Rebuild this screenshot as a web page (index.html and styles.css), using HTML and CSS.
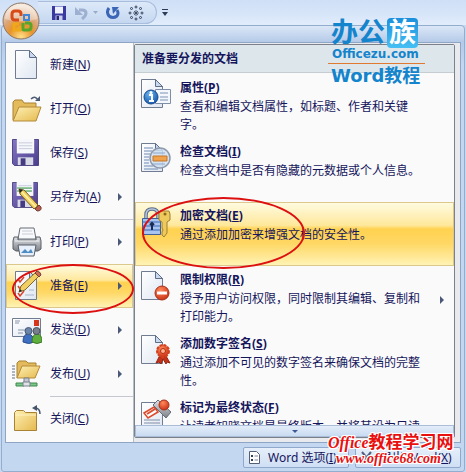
FILE: index.html
```html
<!DOCTYPE html>
<html lang="zh-CN">
<head>
    <meta charset="UTF-8">
    <meta name="viewport" content="width=device-width, initial-scale=1.0">
    <title>Word 教程 - 准备</title>
    <link rel="stylesheet" href="styles.css">
</head>
<body>
    <!-- shared gradients and shapes -->
    <svg class="defs" width="0" height="0" aria-hidden="true">
        <defs>
            <linearGradient id="paper" x1="0" y1="0" x2="1" y2="1">
                <stop offset="0" stop-color="#fff"/>
                <stop offset="1" stop-color="#dfe7f2"/>
            </linearGradient>
            <linearGradient id="gold" x1="0" y1="0" x2="1" y2="1">
                <stop offset="0" stop-color="#fdf0b4"/>
                <stop offset="1" stop-color="#e6b94e"/>
            </linearGradient>
            <linearGradient id="purple" x1="0" y1="0" x2="1" y2="1">
                <stop offset="0" stop-color="#8577c4"/>
                <stop offset="1" stop-color="#4b3d8c"/>
            </linearGradient>
            <linearGradient id="steel" x1="0" y1="0" x2="0" y2="1">
                <stop offset="0" stop-color="#dfe1e4"/>
                <stop offset="1" stop-color="#7d8189"/>
            </linearGradient>
            <radialGradient id="orb" cx=".5" cy=".95" r=".95">
                <stop offset="0" stop-color="#ffe08a"/>
                <stop offset=".35" stop-color="#e8932a"/>
                <stop offset=".6" stop-color="#dba67a"/>
                <stop offset="1" stop-color="#fbf3ea"/>
            </radialGradient>
            <radialGradient id="blueball" cx=".4" cy=".3" r=".8">
                <stop offset="0" stop-color="#6cb4f0"/>
                <stop offset="1" stop-color="#0b4fa8"/>
            </radialGradient>
            <radialGradient id="redball" cx=".4" cy=".3" r=".8">
                <stop offset="0" stop-color="#ff8a5c"/>
                <stop offset="1" stop-color="#c5280c"/>
            </radialGradient>
            <symbol id="page" viewBox="0 0 22 30">
                <path d="M.5.5h14l7 7v21H.5z" fill="url(#paper)" stroke="#6f7c92"/>
                <path d="M14.500.5v7h7z" fill="#c9d8ec" stroke="#5d6e8a"/>
            </symbol>
            <symbol id="floppy" viewBox="0 0 28 28">
                <path d="M.5.5h27v27h-25l-2-2z" fill="url(#purple)" stroke="#4a4080"/>
                <path d="M5 0h18v15H5z" fill="#f6f7fb"/>
                <path d="M7 4h14M7 7h14M7 10h14" stroke="#c6cbd8"/>
                <path d="M6 19h16v8H6z" fill="#d8dbe6"/>
                <path d="M9 20h5v7H9z" fill="#463a82"/>
            </symbol>
            <symbol id="pencil" viewBox="0 0 24 24">
                <path d="M1 1l5 1 14 15-4 4L2 6z" fill="#f2d05a" stroke="#76602c"/>
                <path d="M4 4l14 15" stroke="#fff3ae" stroke-width="1.500"/>
                <path d="M1 1l4 1-3 3z" fill="#222"/>
                <path d="M17 21l4-4 2 2q1 4-4 4z" fill="#bd5a4c" stroke="#70443c"/>
            </symbol>
        </defs>
    </svg>

    <header class="titlebar">
        <div class="quick-access">
            <button class="tool" aria-label="保存">
                <svg width="14" height="14" viewBox="0 0 28 28"><path d="M0 0h28v28H0z" fill="#3939a0"/><path d="M6 1h16v14H6z" fill="#eef2ff"/><path d="M7 19h14v9H7z" fill="#c9cee8"/><path d="M9 20h5v8H9z" fill="#26267a"/></svg>
            </button>
            <button class="tool undo" aria-label="撤消">
                <svg width="14" height="14" viewBox="0 0 14 14"><path d="M5 4h3q4 0 4 3 0 3-4 6" fill="none" stroke="#9db0d2" stroke-width="3"/><path d="M1 1v8h8z" fill="#9db0d2"/></svg>
                <svg width="5" height="3" viewBox="0 0 5 3"><path d="M0 0h5L2.500 3z" fill="#9aabc8"/></svg>
            </button>
            <button class="tool" aria-label="重复">
                <svg width="14" height="14" viewBox="0 0 14 14"><path d="M3 2Q0 6 3 10q4 3 8 0 2-3 0-6" fill="none" stroke="#3b66b8" stroke-width="3"/><path d="M6 1h7l-6 7z" fill="#3b66b8"/></svg>
            </button>
            <button class="tool" aria-label="符号">
                <svg width="16" height="16" viewBox="0 0 16 16" fill="none" stroke="#35425c"><path d="M8 5v6M5 8h6M6 6l4 4M10 6l-4 4" stroke-width=".8"/><g stroke-width="1"><circle cx="8" cy="2" r="1"/><circle cx="8" cy="14" r="1"/><circle cx="2" cy="8" r="1"/><circle cx="14" cy="8" r="1"/><circle cx="3.500" cy="3.500" r="1"/><circle cx="12.500" cy="3.500" r="1"/><circle cx="3.500" cy="12.500" r="1"/><circle cx="12.500" cy="12.500" r="1"/></g></svg>
            </button>
        </div>
        <button class="tool customize" aria-label="自定义快速访问工具栏">
            <svg width="6" height="7" viewBox="0 0 6 7"><path d="M0 .5h6" stroke="#2c3a58"/><path d="M0 3h6L3 7z" fill="#2c3a58"/></svg>
        </button>
        <button class="office-button" aria-label="Office 按钮">
            <svg width="38" height="38" viewBox="0 0 38 38">
                <circle cx="19" cy="19" r="18" fill="url(#orb)" stroke="#8a7768"/>
                <path d="M3 17a16 14 0 0 1 32 0q-16 5-32 0z" fill="#fff" opacity=".35"/>
                <g fill="none" stroke-width="3">
                    <path d="M17 18h-4q-3 0-3-3v-3q0-3 3-3h3q3 0 3 3v2" stroke="#d84a16"/>
                    <path d="M22 13h5v5h-5z" stroke="#3f86d8" stroke-width="2"/>
                    <path d="M17 22h-5v6h6v-4" stroke="#f0a818"/>
                    <path d="M21 21v6q0 1 1 1h4q3 0 3-3v-2q0-2-3-2h-3" stroke="#57a52c"/>
                </g>
            </svg>
        </button>
    </header>

    <main class="menu">
        <div class="menu-body">
            <nav class="commands">
                <button class="command">
                    <svg class="icon" viewBox="0 0 30 30"><use href="#page" x="3" width="22" height="30"/></svg>
                    <span>新建(<u>N</u>)</span>
                </button>
                <button class="command">
                    <svg class="icon" viewBox="0 0 30 30"><path d="M1 26V8l2-2h7l2 3h12v4" fill="#e3bb5c" stroke="#a98234"/><path d="M1 27l6-14h22l-5 14z" fill="url(#gold)" stroke="#b48a38"/><path d="M19 5q4-4 7 1" fill="none" stroke="#4e5d74" stroke-width="1.500"/><path d="M23 7h5V2z" fill="#4e5d74"/></svg>
                    <span>打开(<u>O</u>)</span>
                </button>
                <button class="command">
                    <svg class="icon" viewBox="0 0 30 30"><use href="#floppy" y="1" width="27" height="27"/></svg>
                    <span>保存(<u>S</u>)</span>
                </button>
                <button class="command">
                    <svg class="icon" viewBox="0 0 30 30"><use href="#floppy" width="26" height="26"/><path d="M5 6h15M5 9h15" stroke="#39a045"/><use href="#pencil" x="6" y="6" width="24" height="24"/></svg>
                    <span>另存为(<u>A</u>)</span>
                    <i class="arrow"></i>
                </button>
                <hr>
                <button class="command">
                    <svg class="icon" viewBox="0 0 30 30"><path d="M8 1h14l2 11H6z" fill="#f8f9fb" stroke="#676d78"/><path d="M10 4h10M10 7h11" stroke="#c8ccd4"/><path d="M2 10h4v3h18v-3h4l1 4v8l-3 2H4l-3-2v-8z" fill="url(#steel)" stroke="#5a5e66"/><path d="M3 14h24" stroke="#f4f5f7"/><path d="M6 18h18l-2 11H8z" fill="#e7f0fa" stroke="#5a5e66"/><path d="M9 26l4-4 3 3 3-3 2 4z" fill="#4f8cc4"/></svg>
                    <span>打印(<u>P</u>)</span>
                    <i class="arrow"></i>
                </button>
                <button class="command active">
                    <svg class="icon" viewBox="0 0 30 30"><use href="#page" x="3" width="22" height="30"/><path d="M6 8l2 3 4-5M6 15l2 3 4-5M6 22l2 3 4-5" fill="none" stroke="#d8452c" stroke-width="1.500"/><path d="M13 24h9M17 19h5" stroke="#a9b6ca"/><path d="M7 21l2-6L24 1l4 3-15 15z" fill="#f2cf62" stroke="#80652c"/><path d="M23 2l2-2q4 1 4 4l-2 2z" fill="#cf6a52" stroke="#70443c"/><path d="M7 21l1-3 2 2z" fill="#222"/></svg>
                    <span>准备(<u>E</u>)</span>
                    <i class="arrow"></i>
                </button>
                <button class="command">
                    <svg class="icon" viewBox="0 0 30 30"><path d="M.5 3.500h28v18H.5z" fill="url(#paper)" stroke="#6f7c92"/><path d="M3 6h5M3 8h4M6 15h8M6 18h5" stroke="#8995aa"/><path d="M22 5h5v6h-5z" fill="#d8341c"/><path d="M11 27q0-8 5-8t6 8q-5 3-11 0z" fill="#3f6fc0" stroke="#2a4d8c"/><circle cx="16.500" cy="16" r="3.500" fill="#6b86a8" stroke="#44597a"/><path d="M20 27q0-8 5-8t5 8q-5 3-10 0z" fill="#5fae3e" stroke="#3c7a26"/><circle cx="24.500" cy="16" r="3.500" fill="#777f8c" stroke="#4a505c"/></svg>
                    <span>发送(<u>D</u>)</span>
                    <i class="arrow"></i>
                </button>
                <button class="command">
                    <svg class="icon" viewBox="0 0 30 30"><path d="M0 7h3M0 10h3M0 13h3M0 16h3M0 19h3" stroke="#62708a"/><path d="M5 19V4l2-2h7l2 2h8v4" fill="#e3bb5c" stroke="#a98234"/><path d="M5 19L10 7h18l-5 12z" fill="url(#gold)" stroke="#b48a38"/><path d="M12 19h5v7h-5z" fill="#c3c8d0" stroke="#7a828e"/><path d="M4 24h8v3H4zM17 24h8v3h-8z" fill="#7cc68a" stroke="#3a8a4c"/><path d="M11 23h7v4h-7z" fill="#dfe3e8" stroke="#7a828e"/></svg>
                    <span>发布(<u>U</u>)</span>
                    <i class="arrow"></i>
                </button>
                <hr>
                <button class="command">
                    <svg class="icon" viewBox="0 0 30 30"><path d="M2.500 26.500V8.500l2-2h7l2 2h11v18z" fill="url(#gold)" stroke="#a98234"/><path d="M3 11h21" stroke="#fff3c0"/><path d="M28 10q0-6-5-6" fill="none" stroke="#44546c" stroke-width="1.500"/><path d="M20 4l5-3v6z" fill="#44546c"/></svg>
                    <span>关闭(<u>C</u>)</span>
                </button>
            </nav>

            <section class="submenu">
                <h2>准备要分发的文档</h2>
                <div class="entries">
                    <button class="entry">
                        <svg class="icon" viewBox="0 0 30 30"><use href="#page" width="22" height="30"/><path d="M14.500 10.500h15v14h-15z" fill="#f4f8fd" stroke="#7f8ea8"/><path d="M19 14h8M19 18h8M19 21h8" stroke="#7c90b4"/><circle cx="10" cy="18" r="7" fill="url(#blueball)" stroke="#1a4a8c"/><path d="M8 16h3v6M8 22h5" fill="none" stroke="#fff" stroke-width="2"/><circle cx="10" cy="13.500" r="1.500" fill="#fff"/></svg>
                        <span class="entry-text"><b>属性(<u>P</u>)</b><span>查看和编辑文档属性，如标题、作者和关键字。</span></span>
                    </button>
                    <button class="entry">
                        <svg class="icon" viewBox="0 0 30 30"><use href="#page" width="22" height="30"/><path d="M3 5h9M3 8h8M3 11h6M3 14h5M3 17h5M3 20h5M3 23h9M3 26h14" stroke="#6f89b4"/><circle cx="19" cy="15" r="10" fill="#cfe0f2" fill-opacity=".85" stroke="#8e9aac" stroke-width="1.500"/><path d="M12 13h14v5H12z" fill="#f0a24c" stroke="#c5762a"/><path d="M12 10h12M12 21h12" stroke="#8fa6c8"/></svg>
                        <span class="entry-text"><b>检查文档(<u>I</u>)</b><span>检查文档中是否有隐藏的元数据或个人信息。</span></span>
                    </button>
                    <button class="entry active">
                        <svg class="icon" viewBox="0 0 30 30"><path d="M5 13V8q0-6 6-6t6 6v5" fill="none" stroke="#5c6c88" stroke-width="3.500"/><path d="M5 13V8q0-6 6-6t6 6v5" fill="none" stroke="#b8c8e0" stroke-width="1.500"/><path d="M1.500 11.500h18v16h-18z" fill="#a9c4ee" stroke="#40609c"/><path d="M2 15h17M2 19h17M2 23h17" stroke="#5e86cc" stroke-width="1.500"/><path d="M11 23v-6M9 18l2-2 2 2" stroke="#1c2c50" stroke-width="2" fill="none"/><path d="M19 4h9l1 3v6l-3 2v11l-3 4-2-2v-3l1-2-1-2v-6l-3-2V6z" fill="#eec95c" stroke="#a08030"/><circle cx="24" cy="7" r="1.500" fill="#8a6a20"/></svg>
                        <span class="entry-text"><b>加密文档(<u>E</u>)</b><span>通过添加加密来增强文档的安全性。</span></span>
                    </button>
                    <button class="entry">
                        <svg class="icon" viewBox="0 0 30 30"><use href="#page" width="22" height="30"/><circle cx="21" cy="22" r="7" fill="url(#redball)" stroke="#a83018"/><path d="M16 20.500h10v3H16z" fill="#fff"/></svg>
                        <span class="entry-text"><b>限制权限(<u>R</u>)</b><span>授予用户访问权限，同时限制其编辑、复制和打印能力。</span></span>
                        <i class="arrow"></i>
                    </button>
                    <button class="entry">
                        <svg class="icon" viewBox="0 0 30 30"><use href="#page" width="22" height="30"/><path d="M18 22l-3 6 3-1 2 2 2-5 3 5 1-2 3 1-4-7z" fill="#c2321a" stroke="#982410"/><circle cx="22" cy="16" r="6" fill="url(#redball)" stroke="#d4401c" stroke-width="2" stroke-dasharray="3 1"/><circle cx="22" cy="16" r="2.500" fill="#ffb08c" stroke="#b02c12"/></svg>
                        <span class="entry-text"><b>添加数字签名(<u>S</u>)</b><span>通过添加不可见的数字签名来确保文档的完整性。</span></span>
                    </button>
                    <button class="entry">
                        <svg class="icon" viewBox="0 0 30 30"><use href="#page" y="3" width="22" height="30"/><path d="M3 21h16M3 24h16M3 27h16" stroke="#7f8da8"/><path d="M3 14l10-6 4 5-10 6z" fill="#fff" stroke="#dc4a2c" stroke-width="1.500"/><path d="M6 15l8-5" stroke="#dc4a2c" stroke-width="2"/><path d="M12 6l5-5 13 12-5 6z" fill="url(#steel)" stroke="#666c78"/><circle cx="23" cy="6" r="5" fill="url(#redball)" stroke="#a83018"/></svg>
                        <span class="entry-text"><b>标记为最终状态(<u>F</u>)</b><span>让读者知晓文档是最终版本，并将其设为只读的。</span></span>
                    </button>
                </div>
                <button class="scroll-down" aria-label="向下滚动"><i></i></button>
            </section>
        </div>

        <footer class="menu-footer">
            <button class="option">
                <svg width="11" height="13" viewBox="0 0 11 13"><path d="M.5.5h7l3 3v9H.5z" fill="#fff" stroke="#54607a"/><path d="M2 4h2v2H2zM2 8h2v2H2z" fill="#33405c"/><path d="M5.500 5H9M5.500 9H9" stroke="#7a859c"/></svg>
                <span>Word 选项(<u>I</u>)</span>
            </button>
            <button class="option exit">
                <svg width="11" height="13" viewBox="0 0 11 13"><path d="M1 1l9 11M10 1L1 12" stroke="#54607a" stroke-width="2"/></svg>
                <span>退出 Word(<u>X</u>)</span>
            </button>
        </footer>

        <div class="ring ring-prepare"></div>
        <div class="ring ring-encrypt"></div>
        <div class="site-mark"><span><em>Office</em>教程学习网</span><em class="site-url">www.office68.com</em></div>
    </main>

    <aside class="logo">
        <div class="logo-name">办公<span>族</span></div>
        <div class="logo-site">Officezu.com</div>
        <div class="logo-topic">Word教程</div>
    </aside>
</body>
</html>
```

FILE: styles.css
```css
* {
    box-sizing: border-box;
}
body {
    position: relative;
    margin: 0;
    background: #c6d9f1;
    color: #15155c;
    font-family: "Noto Sans", "Noto Sans CJK SC", sans-serif;
    font-size: 12px;
}
button {
    margin: 0;
    padding: 0;
    border: 0;
    background: none;
    color: inherit;
    font: inherit;
    text-align: left;
}
svg {
    display: block;
    flex: none;
}
.defs {
    position: absolute;
}

/* title bar */
.titlebar {
    position: relative;
    z-index: 1;
    display: flex;
    align-items: center;
    height: 25px;
    padding-left: 38px;
    background: linear-gradient(#cfdff6, #d8e6f9 60%, #e2edfb);
}
.quick-access {
    display: flex;
    align-items: center;
    gap: 8px;
    height: 23px;
    padding: 0 12px 0 14px;
    border: 1px solid #a9bddc;
    border-left: 0;
    border-radius: 0 12px 12px 0;
    background: linear-gradient(#dde9f9, #c5d7f0);
}
.tool {
    display: flex;
    align-items: center;
    gap: 5px;
}
.customize {
    margin-left: 5px;
}
.office-button {
    position: absolute;
    top: 2px;
    left: 2px;
}

/* menu window */
.menu {
    position: relative;
    margin: 0 1px;
    padding: 16px 3px 0;
    border: 1px solid #93adcf;
    border-radius: 4px 4px 3px 3px;
    background: linear-gradient(#dbe7f7, #b5cae8 16px, #c4d7f0 40px, #c4d7f0);
}
.menu-body {
    display: flex;
    border: 1px solid #8fa5c6;
    background: #e9eaee;
}
.commands {
    flex: none;
    width: 128px;
    padding-bottom: 1px;
    background: #fafafa;
    border-right: 1px solid #b8bcc4;
}
.command {
    display: flex;
    align-items: center;
    gap: 8px;
    width: 100%;
    height: 44px;
    padding: 0 10px 0 5px;
    border: 1px solid transparent;
    line-height: 18px;
}
.icon {
    width: 30px;
    height: 30px;
}
.commands hr {
    height: 1px;
    margin: 0 0 0 44px;
    border: 0;
    background: #c5c8ce;
}
.arrow {
    flex: none;
    margin-left: auto;
    border: 4px solid transparent;
    border-right: 0;
    border-left-color: #4b5878;
}
.command.active,
.entry.active {
    border-color: #dcc88c;
    background: linear-gradient(#fffbe0, #ffe89c 36%, #ffd250 42%, #ffd764 65%, #fff3b4);
}

/* right panel */
.submenu {
    display: flex;
    flex: 1;
    flex-direction: column;
    min-width: 0;
    margin: 1px 5px 4px 0;
    border: 1px solid #7c8088;
    border-radius: 2px;
    background: #fafafa;
}
.submenu h2 {
    margin: 0 0 1px;
    padding: 5px 7px 4px;
    border-bottom: 1px solid #c5cdd2;
    background: #dde6eb;
    font-size: 12px;
    line-height: 18px;
}
.entries {
    flex: 1 1 auto;
    height: 0;
    overflow: hidden;
}
.entry {
    display: flex;
    align-items: flex-start;
    gap: 9px;
    width: 100%;
    height: 64px;
    padding: 4px 9px 0 5px;
    border: 1px solid transparent;
}
.entry .arrow {
    align-self: center;
}
.entry-text {
    width: 242px;
    line-height: 18px;
}
.entry-text b {
    display: block;
    margin-bottom: 1px;
}
.scroll-down {
    display: flex;
    align-items: center;
    justify-content: center;
    height: 12px;
    border: 1px solid #a9bcd8;
    background: linear-gradient(#e4edf9, #c9dbf2);
}
.scroll-down i {
    border: 3px solid transparent;
    border-top-color: #3c5890;
    border-bottom: 0;
}

/* bottom buttons */
.menu-footer {
    display: flex;
    justify-content: flex-end;
    gap: 6px;
    padding: 4px 0 3px;
}
.option {
    display: flex;
    align-items: center;
    gap: 8px;
    width: 106px;
    height: 21px;
    padding: 0 5px;
    border: 1px solid #8fa8cc;
    border-radius: 2px;
    background: linear-gradient(#e6effa, #cfdff4);
    line-height: 18px;
    white-space: nowrap;
}

/* marks drawn over the menu */
.ring {
    position: absolute;
    border: 2px solid #dc1010;
    border-radius: 50%;
}
.ring-prepare {
    top: 238px;
    left: 10px;
    width: 122px;
    height: 50px;
}
.ring-encrypt {
    top: 171px;
    left: 140px;
    width: 163px;
    height: 72px;
}
.site-mark {
    position: absolute;
    right: 10px;
    bottom: 4px;
    display: flex;
    flex-direction: column;
    width: 126px;
    color: #e81010;
    font: bold 17px/16px "Liberation Serif", "Noto Sans CJK SC", serif;
    text-shadow: 1px 0 #fff, -1px 0 #fff, 0 1px #fff, 0 -1px #fff, 1px 1px #fff, -1px -1px #fff, 1px -1px #fff, -1px 1px #fff;
    white-space: nowrap;
}
.site-mark em {
    font-size: 16px;
}
.site-mark .site-url {
    padding-left: 8px;
    font-size: 14px;
}

/* logo */
.logo {
    position: absolute;
    z-index: 2;
    top: 18px;
    right: 41px;
    width: 97px;
    color: #1484cc;
    font-family: "DejaVu Sans", "Noto Sans CJK SC", sans-serif;
    font-weight: bold;
    white-space: nowrap;
}
.logo-name {
    display: flex;
    align-items: center;
    gap: 2px;
    padding-left: 3px;
    font-size: 27px;
    line-height: 30px;
}
.logo-name span {
    width: 31px;
    border-radius: 4px;
    background: linear-gradient(#1c8fdc, #45c0f4);
    color: #fff;
    text-align: center;
}
.logo-site {
    padding: 0 4px 2px;
    border-bottom: 1px solid #e07a30;
    font-size: 12px;
    line-height: 13px;
}
.logo-topic {
    padding: 2px 3px;
    font-size: 18px;
    line-height: 20px;
}
```
